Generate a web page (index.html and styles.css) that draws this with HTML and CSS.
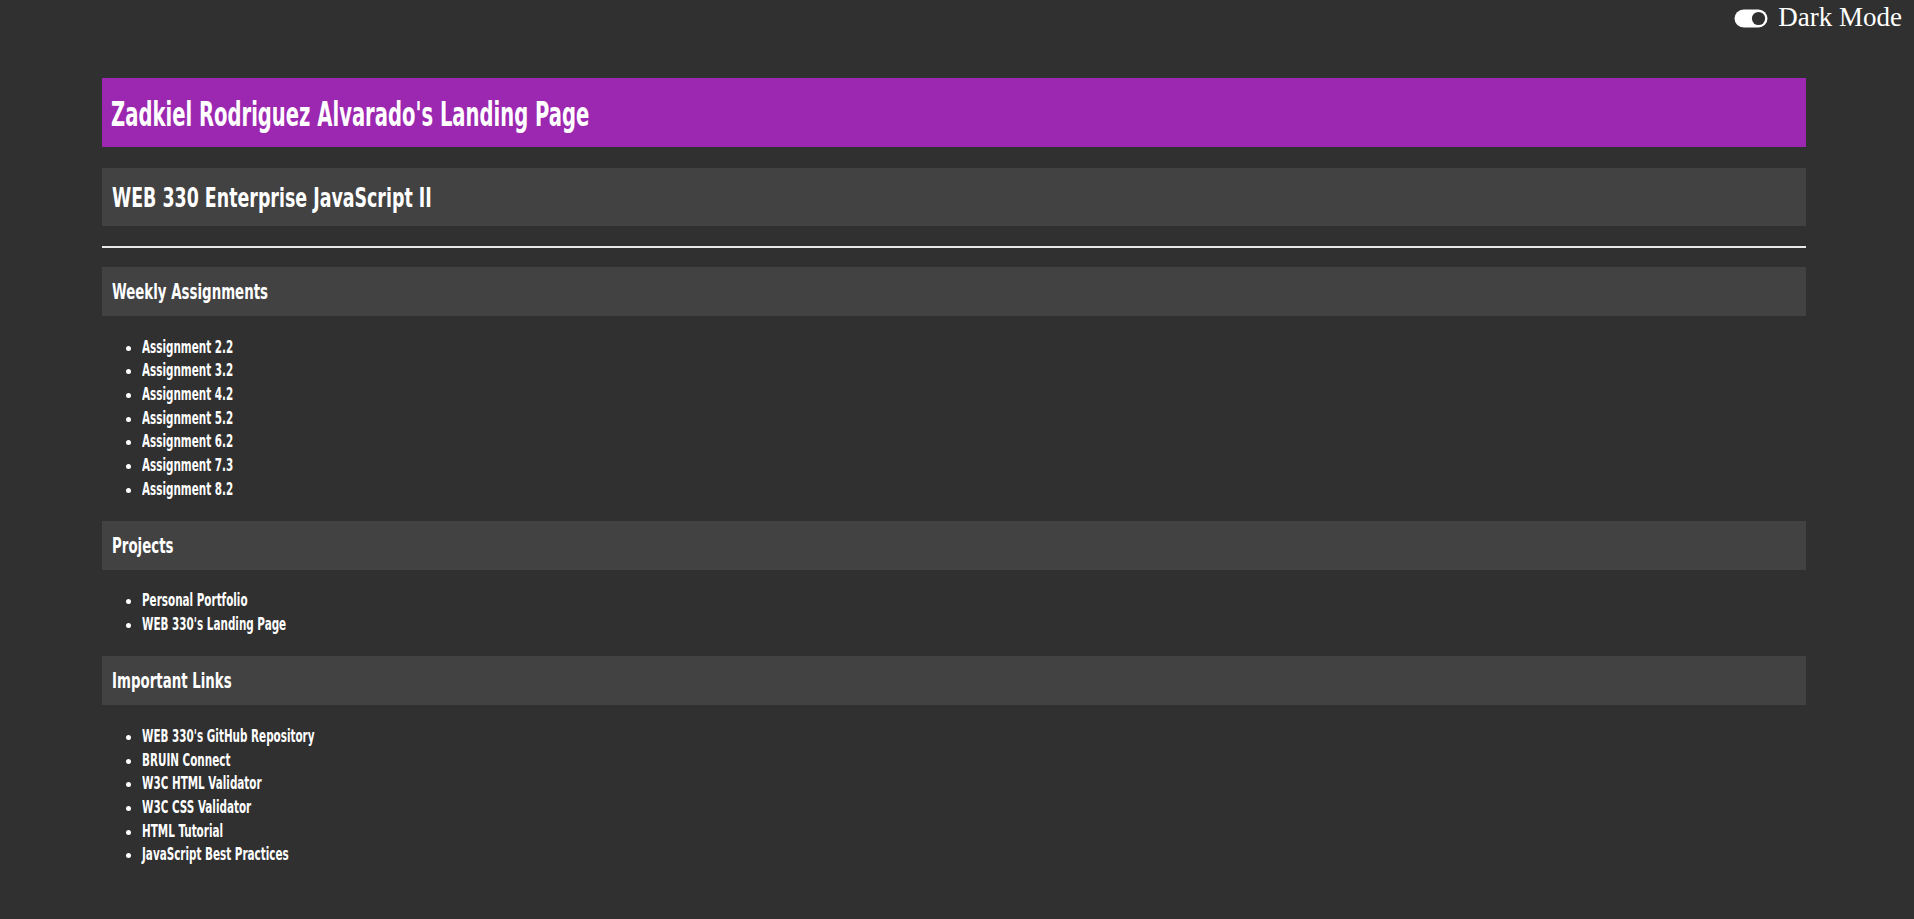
FILE: index.html
```html
<!DOCTYPE html>
<html lang="en">
<head>
<meta charset="utf-8">
<title>Zadkiel Rodriguez Alvarado's Landing Page</title>
<link rel="stylesheet" href="styles.css">
</head>
<body>
<div class="mode-toggle">
  <svg class="toggle-icon" width="34" height="19" viewBox="0 0 34 19" aria-hidden="true">
    <rect x="0.5" y="0.5" width="33" height="18" rx="9" fill="#ffffff"/>
    <circle cx="24.5" cy="9.5" r="6.6" fill="#303030"/>
  </svg>
  <span class="mode-label">Dark Mode</span>
</div>
<main class="page">
  <header class="banner"><h1 class="title"><span class="fit">Zadkiel Rodriguez Alvarado's Landing Page</span></h1></header>
  <h2 class="course"><span class="fit">WEB 330 Enterprise JavaScript II</span></h2>
  <hr class="divider">
  <section class="group">
    <h3 class="group-title"><span class="fit">Weekly Assignments</span></h3>
    <ul class="links">
      <li><a href="#">Assignment 2.2</a></li>
      <li><a href="#">Assignment 3.2</a></li>
      <li><a href="#">Assignment 4.2</a></li>
      <li><a href="#">Assignment 5.2</a></li>
      <li><a href="#">Assignment 6.2</a></li>
      <li><a href="#">Assignment 7.3</a></li>
      <li><a href="#">Assignment 8.2</a></li>
    </ul>
  </section>
  <section class="group">
    <h3 class="group-title"><span class="fit">Projects</span></h3>
    <ul class="links">
      <li><a href="#">Personal Portfolio</a></li>
      <li><a href="#">WEB 330's Landing Page</a></li>
    </ul>
  </section>
  <section class="group">
    <h3 class="group-title"><span class="fit">Important Links</span></h3>
    <ul class="links">
      <li><a href="#">WEB 330's GitHub Repository</a></li>
      <li><a href="#">BRUIN Connect</a></li>
      <li><a href="#">W3C HTML Validator</a></li>
      <li><a href="#">W3C CSS Validator</a></li>
      <li><a href="#">HTML Tutorial</a></li>
      <li><a href="#">JavaScript Best Practices</a></li>
    </ul>
  </section>
</main>
</body>
</html>
```
FILE: styles.css
```css
html, body {
  margin: 0;
  padding: 0;
  background: #303030;
  color: #ffffff;
}

body {
  font-family: "DejaVu Sans Condensed", "DejaVu Sans", sans-serif;
  font-stretch: condensed;
}

.mode-toggle {
  position: absolute;
  top: 2px;
  right: 12px;
  display: flex;
  align-items: center;
  gap: 10px;
  font-family: "Liberation Serif", serif;
  font-stretch: normal;
  font-size: 27px;
  line-height: 31px;
}

.toggle-icon {
  display: block;
  margin-top: 2px;
}

.page {
  margin: 0 0 0 102px;
  width: 1704px;
  padding-top: 78px;
  padding-bottom: 40px;
}

.fit {
  display: inline-block;
  transform-origin: left center;
  white-space: nowrap;
}

.banner {
  background: #9c27b0;
  padding: 12px 9px 8px;
}

.title {
  margin: 0;
  font-size: 34px;
  line-height: 49px;
  font-weight: 700;
}

.title .fit {
  transform: scaleX(0.64);
}

.course {
  margin: 21px 0 0;
  background: #424242;
  padding: 11px 10px 9px;
  font-size: 27px;
  line-height: 38px;
  font-weight: 700;
}

.course .fit {
  transform: scaleX(0.717);
}

.divider {
  margin: 20px 0 19px;
  border: 0;
  height: 2px;
  background: #e8e8e8;
}

.group-title {
  margin: 0;
  background: #424242;
  padding: 11px 10px 9px;
  font-size: 20.5px;
  line-height: 29px;
  font-weight: 700;
}

.group-title .fit {
  transform: scaleX(0.725);
}

.links {
  margin: 19.5px 0;
  padding-left: 40px;
  font-size: 17px;
  line-height: 23.7px;
}

.links li::marker {
  color: #ffffff;
  font-size: 15px;
}

.links a {
  display: inline-block;
  color: #ffffff;
  text-decoration: none;
  font-weight: 700;
  transform: scaleX(0.68);
  transform-origin: left center;
  white-space: nowrap;
}
```
